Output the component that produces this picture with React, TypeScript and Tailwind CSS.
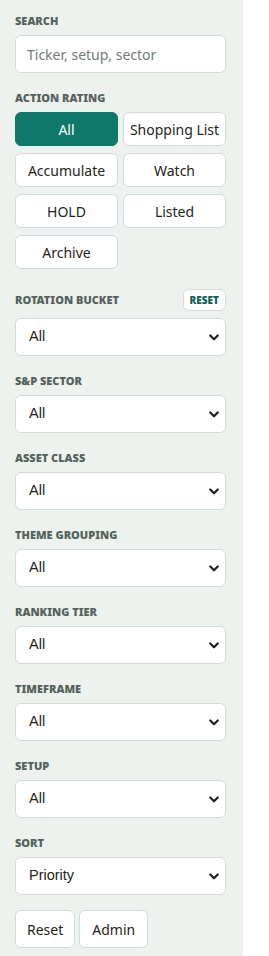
import { useState } from 'react';

const ratings = ['All', 'Shopping List', 'Accumulate', 'Watch', 'HOLD', 'Listed', 'Archive'];

const filters = [
  { label: 'S&P Sector', value: 'All' },
  { label: 'Asset Class', value: 'All' },
  { label: 'Theme Grouping', value: 'All' },
  { label: 'Ranking Tier', value: 'All' },
  { label: 'Timeframe', value: 'All' },
  { label: 'Setup', value: 'All' },
  { label: 'Sort', value: 'Priority' },
];

function Label({ children }: { children: React.ReactNode }) {
  return (
    <div className="text-[11px] font-black uppercase leading-[14px] text-[#55625c]">
      {children}
    </div>
  );
}

function Select({ value }: { value: string }) {
  return (
    <div className="relative">
      <select
        defaultValue={value}
        className="h-[38px] w-full appearance-none rounded-[6px] border border-[#d3dbd6] bg-white pl-[13px] pr-8 text-[14.5px] text-[#1f2421] outline-none"
        style={{ fontFamily: '"Liberation Sans", Arial, sans-serif' }}
      >
        <option>{value}</option>
      </select>
      <svg
        className="pointer-events-none absolute right-[6px] top-1/2 h-[12px] w-[12px] -translate-y-1/2"
        viewBox="0 0 16 16"
        fill="none"
        stroke="#222"
        strokeWidth="3"
        strokeLinecap="round"
        strokeLinejoin="round"
      >
        <path d="M3 6l5 5 5-5" />
      </svg>
    </div>
  );
}

export default function App() {
  const [active, setActive] = useState('All');

  return (
    <div
      className="flex min-h-[956px] w-[269px] bg-white"
      style={{ fontFamily: '"Noto Sans", "Open Sans", sans-serif' }}
    >
      <aside className="flex w-[243px] flex-col bg-[#eef2ef] pl-[15px] pr-[17px] pt-[14px]">
        <Label>Search</Label>
        <input
          placeholder="Ticker, setup, sector"
          className="mt-[7px] h-[38px] w-full rounded-[6px] border border-[#d3dbd6] bg-white px-[11px] text-[14px] text-[#1f2421] outline-none placeholder:text-[#737b77]"
        />

        <div className="mt-[18px]">
          <Label>Action Rating</Label>
        </div>
        <div className="mt-[7px] grid grid-cols-2 gap-x-[5px] gap-y-[7px]">
          {ratings.map((r) => (
            <button
              key={r}
              onClick={() => setActive(r)}
              className={
                r === active
                  ? 'h-[34px] rounded-[6px] border border-[#10776b] bg-[#10776b] text-[14px] text-white'
                  : 'h-[34px] rounded-[6px] border border-[#d3dbd6] bg-white text-[14px] text-[#1f2421]'
              }
            >
              {r}
            </button>
          ))}
        </div>

        <div className="mt-[20px] flex items-center justify-between">
          <Label>Rotation Bucket</Label>
          <button className="h-[22px] rounded-[6px] border border-[#d3dbd6] bg-white px-[6px] text-[10px] font-black uppercase text-[#0f5e55]">
            Reset
          </button>
        </div>
        <div className="mt-[7px]">
          <Select value="All" />
        </div>

        {filters.map((f) => (
          <div key={f.label} className="mt-[18px]">
            <Label>{f.label}</Label>
            <div className="mt-[7px]">
              <Select value={f.value} />
            </div>
          </div>
        ))}

        <div className="mt-[15px] flex gap-[4px]">
          <button className="h-[38px] rounded-[6px] border border-[#d3dbd6] bg-white px-[11px] text-[14px] text-[#1f2421]">
            Reset
          </button>
          <button className="h-[38px] rounded-[6px] border border-[#d3dbd6] bg-white px-[12px] text-[14px] text-[#1f2421]">
            Admin
          </button>
        </div>
      </aside>
    </div>
  );
}
